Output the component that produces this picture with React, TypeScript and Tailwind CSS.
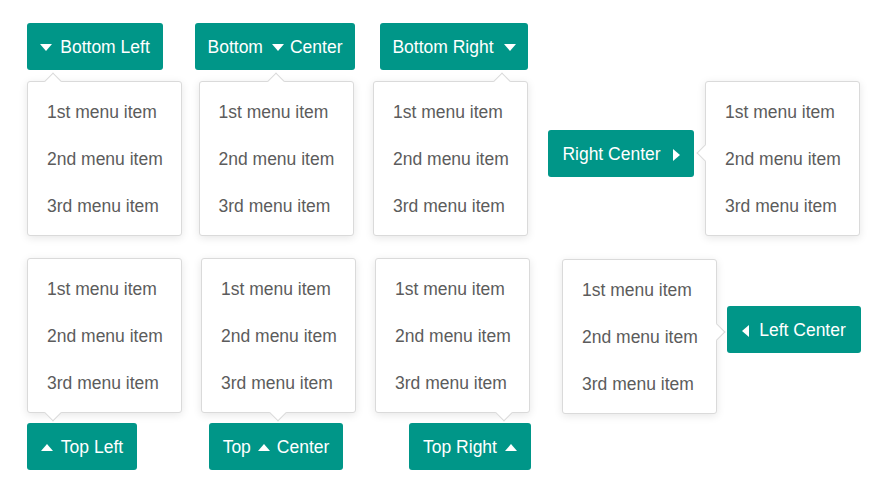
import React from "react";

type Side = "down" | "up" | "left" | "right";

function Caret({ dir }: { dir: Side }) {
  if (dir === "down")
    return (
      <svg width="12" height="7" viewBox="0 0 12 7" className="shrink-0">
        <path d="M0 0 L12 0 L6 7 Z" fill="white" />
      </svg>
    );
  if (dir === "up")
    return (
      <svg width="12" height="7" viewBox="0 0 12 7" className="shrink-0">
        <path d="M0 7 L12 7 L6 0 Z" fill="white" />
      </svg>
    );
  if (dir === "right")
    return (
      <svg width="7" height="12" viewBox="0 0 7 12" className="shrink-0">
        <path d="M0 0 L7 6 L0 12 Z" fill="white" />
      </svg>
    );
  return (
    <svg width="7" height="12" viewBox="0 0 7 12" className="shrink-0">
      <path d="M7 0 L0 6 L7 12 Z" fill="white" />
    </svg>
  );
}

function TealButton({
  width,
  className = "",
  children,
}: {
  width: string;
  className?: string;
  children: React.ReactNode;
}) {
  return (
    <button
      className={`${width} ${className} h-[47px] shrink-0 flex items-center justify-center pt-[2px] rounded-[3px] bg-[#009688] text-white text-[17.5px] leading-none whitespace-nowrap`}
    >
      {children}
    </button>
  );
}

function Menu({ arrow, className = "" }: { arrow: React.ReactNode; className?: string }) {
  const items = ["1st menu item", "2nd menu item", "3rd menu item"];
  return (
    <div
      className={`relative w-[155px] shrink-0 bg-white border border-[#dadada] rounded-[3px] pt-[7px] pb-[5px] shadow-[0_2px_8px_rgba(0,0,0,0.1)] ${className}`}
    >
      {arrow}
      {items.map((item) => (
        <div
          key={item}
          className="relative h-[47px] flex items-center px-[19px] text-[17.5px] text-[#5c5c5c] whitespace-nowrap"
        >
          {item}
        </div>
      ))}
    </div>
  );
}

const arrowBase = "absolute w-[12px] h-[12px] rotate-45 bg-white border-[#dadada]";

export default function App() {
  return (
    <div
      className="w-[889px] h-[498px] bg-white pt-[23px] pl-[27px] overflow-hidden"
      style={{ fontFamily: '"Liberation Sans", Arial, sans-serif' }}
    >
      {/* Row 1: bottom placements + right center */}
      <div className="flex items-start">
        <div className="w-[155px] flex flex-col items-start">
          <TealButton width="w-[136px]">
            <Caret dir="down" />
            <span className="ml-[8px]">Bottom Left</span>
          </TealButton>
          <Menu
            className="mt-[11px]"
            arrow={<div className={`${arrowBase} -top-[7px] left-[19px] border-l border-t`} />}
          />
        </div>

        <div className="ml-[13px] w-[160px] flex flex-col items-center">
          <TealButton width="w-[160px]">
            <span>Bottom</span>
            <span className="ml-[9px] mr-[6px] flex">
              <Caret dir="down" />
            </span>
            <span>Center</span>
          </TealButton>
          <Menu
            className="mt-[11px] ml-[2px]"
            arrow={
              <div
                className={`${arrowBase} -top-[7px] left-[70px] border-l border-t`}
              />
            }
          />
        </div>

        <div className="ml-[18px] w-[155px] flex flex-col items-end">
          <TealButton width="w-[148px]">
            <span>Bottom Right</span>
            <span className="ml-[10px] flex">
              <Caret dir="down" />
            </span>
          </TealButton>
          <Menu
            className="mt-[11px]"
            arrow={<div className={`${arrowBase} -top-[7px] right-[19px] border-l border-t`} />}
          />
        </div>

        <div className="ml-[20px] flex items-start">
          <TealButton width="w-[146px]" className="mt-[107px]">
            <span>Right Center</span>
            <span className="ml-[12px] flex">
              <Caret dir="right" />
            </span>
          </TealButton>
          <Menu
            className="mt-[58px] ml-[11px]"
            arrow={<div className={`${arrowBase} -left-[7px] top-[65px] border-l border-b`} />}
          />
        </div>
      </div>

      {/* Row 2: top placements + left center */}
      <div className="flex items-start mt-[22px]">
        <div className="w-[155px] flex flex-col items-start">
          <Menu
            arrow={<div className={`${arrowBase} -bottom-[7px] left-[19px] border-r border-b`} />}
          />
          <TealButton width="w-[110px]" className="mt-[10px]">
            <Caret dir="up" />
            <span className="ml-[8px]">Top Left</span>
          </TealButton>
        </div>

        <div className="ml-[19px] w-[155px] flex flex-col items-start">
          <Menu
            arrow={
              <div
                className={`${arrowBase} -bottom-[7px] left-[70px] border-r border-b`}
              />
            }
          />
          <TealButton width="w-[134px]" className="mt-[10px] ml-[8px]">
            <span>Top</span>
            <span className="mx-[7px] flex">
              <Caret dir="up" />
            </span>
            <span>Center</span>
          </TealButton>
        </div>

        <div className="ml-[19px] w-[156px] flex flex-col items-end">
          <Menu
            className="mr-[1px]"
            arrow={<div className={`${arrowBase} -bottom-[7px] right-[19px] border-r border-b`} />}
          />
          <TealButton width="w-[122px]" className="mt-[10px]">
            <span>Top Right</span>
            <span className="ml-[8px] flex">
              <Caret dir="up" />
            </span>
          </TealButton>
        </div>

        <div className="ml-[31px] flex items-start">
          <Menu
            className="mt-[1px]"
            arrow={<div className={`${arrowBase} -right-[7px] top-[66px] border-t border-r`} />}
          />
          <TealButton width="w-[134px]" className="mt-[48px] ml-[10px]">
            <Caret dir="left" />
            <span className="ml-[10px]">Left Center</span>
          </TealButton>
        </div>
      </div>
    </div>
  );
}
